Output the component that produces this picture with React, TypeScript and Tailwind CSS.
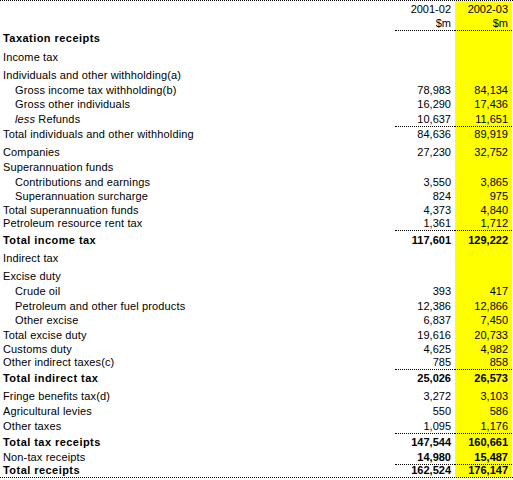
import type { ReactNode } from "react";

type Row = {
  label: ReactNode;
  a?: string;
  b?: string;
  h: number;
  bold?: boolean;
  boldNums?: boolean;
  indent?: boolean;
  line?: boolean;
};

const rows: Row[] = [
  { label: "", a: "2001-02", b: "2002-03", h: 15 },
  { label: "", a: "$m", b: "$m", h: 14, line: true },
  { label: "Taxation receipts", h: 14, bold: true },
  { label: "Income tax", h: 19 },
  { label: "Individuals and other withholding(a)", h: 18 },
  { label: "Gross income tax withholding(b)", a: "78,983", b: "84,134", h: 15, indent: true },
  { label: "Gross other individuals", a: "16,290", b: "17,436", h: 14, indent: true },
  {
    label: (
      <>
        <span className="italic">less</span>&nbsp;Refunds
      </>
    ),
    a: "10,637",
    b: "11,651",
    h: 15,
    indent: true,
    line: true,
  },
  { label: "Total individuals and other withholding", a: "84,636", b: "89,919", h: 14 },
  { label: "Companies", a: "27,230", b: "32,752", h: 18 },
  { label: "Superannuation funds", h: 15 },
  { label: "Contributions and earnings", a: "3,550", b: "3,865", h: 15, indent: true },
  { label: "Superannuation surcharge", a: "824", b: "975", h: 14, indent: true },
  { label: "Total superannuation funds", a: "4,373", b: "4,840", h: 14 },
  { label: "Petroleum resource rent tax", a: "1,361", b: "1,712", h: 13, line: true },
  { label: "Total income tax", a: "117,601", b: "129,222", h: 16, bold: true, boldNums: true },
  { label: "Indirect tax", h: 18 },
  { label: "Excise duty", h: 18 },
  { label: "Crude oil", a: "393", b: "417", h: 15, indent: true },
  { label: "Petroleum and other fuel products", a: "12,386", b: "12,866", h: 15, indent: true },
  { label: "Other excise", a: "6,837", b: "7,450", h: 14, indent: true },
  { label: "Total excise duty", a: "19,616", b: "20,733", h: 15 },
  { label: "Customs duty", a: "4,625", b: "4,982", h: 14 },
  { label: "Other indirect taxes(c)", a: "785", b: "858", h: 13, line: true },
  { label: "Total indirect tax", a: "25,026", b: "26,573", h: 15, bold: true, boldNums: true },
  { label: "Fringe benefits tax(d)", a: "3,272", b: "3,103", h: 18 },
  { label: "Agricultural levies", a: "550", b: "586", h: 15 },
  { label: "Other taxes", a: "1,095", b: "1,176", h: 15, line: true },
  { label: "Total tax receipts", a: "147,544", b: "160,661", h: 15, bold: true, boldNums: true },
  { label: "Non-tax receipts", a: "14,980", b: "15,487", h: 15, boldNums: true, line: true },
  { label: "Total receipts", a: "162,524", b: "176,147", h: 12, bold: true, boldNums: true },
];

export default function App() {
  return (
    <div className="w-[513px] h-[480px] bg-white text-black text-[11px] leading-[14px] font-['Liberation_Sans',Arial,sans-serif]">
      <div className="border-y border-dotted border-black">
        {rows.map((r, i) => {
          const edge = r.line ? "border-b border-dotted" : "";
          return (
            <div key={i} className="flex" style={{ height: r.h + (r.line ? 1 : 0) }}>
              <div
                className={`w-[395px] flex items-end whitespace-nowrap ${r.indent ? "pl-[15px]" : "pl-[3px]"} ${
                  r.bold ? "font-bold tracking-[0.45px]" : "tracking-[0.14px]"
                } ${r.line ? "border-b border-transparent" : ""}`}
              >
                <span>{r.label}</span>
              </div>
              <div
                className={`w-[60px] flex items-end justify-end pr-[4px] border-black ${edge} ${
                  r.boldNums ? "font-bold" : ""
                }`}
              >
                {r.a}
              </div>
              <div
                className={`w-[57px] flex items-end justify-end pr-[4px] bg-[#ffff00] border-black ${edge} ${
                  r.boldNums ? "font-bold" : ""
                }`}
              >
                {r.b}
              </div>
              <div className="w-[1px]" />
            </div>
          );
        })}
      </div>
    </div>
  );
}
